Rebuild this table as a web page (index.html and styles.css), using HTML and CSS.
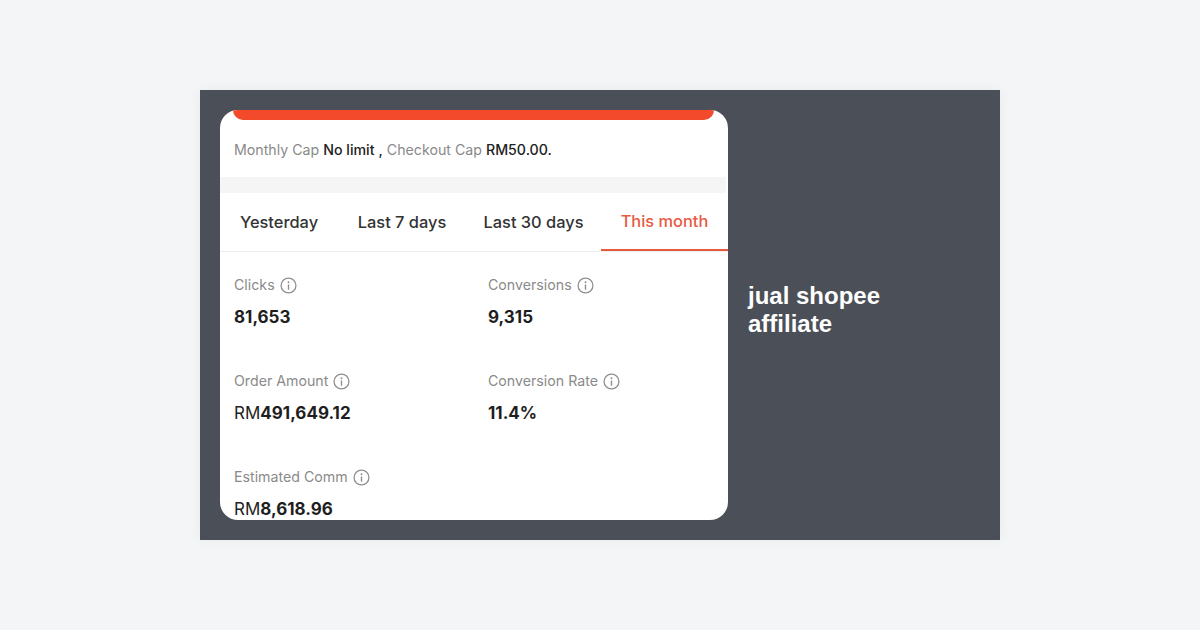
FILE: index.html
```html
<!DOCTYPE html>
<html>
<head>
<meta charset="utf-8">
<link rel="stylesheet" href="styles.css">
</head>
<body>
<div class="panel">
  <div class="card">
    <div class="redbar"></div>
    <div class="cap"><span class="muted">Monthly Cap</span> <span class="dark">No limit</span> <span class="dark">,</span> <span class="muted">Checkout Cap</span> <span class="dark">RM50.00.</span></div>
    <div class="band"></div>
    <div class="tabs">
      <div class="tab">Yesterday</div>
      <div class="tab">Last 7 days</div>
      <div class="tab">Last 30 days</div>
      <div class="tab active">This month</div>
    </div>
    <div class="stats">
      <div class="stat">
        <div class="label">Clicks <svg class="info" viewBox="0 0 16 16"><circle cx="8" cy="8" r="7" fill="none" stroke="#8f8f8f" stroke-width="1.2"/><circle cx="8" cy="4.9" r="0.9" fill="#8f8f8f"/><path d="M8 7v5" stroke="#8f8f8f" stroke-width="1.3" fill="none"/></svg></div>
        <div class="value">81,653</div>
      </div>
      <div class="stat">
        <div class="label">Conversions <svg class="info" viewBox="0 0 16 16"><circle cx="8" cy="8" r="7" fill="none" stroke="#8f8f8f" stroke-width="1.2"/><circle cx="8" cy="4.9" r="0.9" fill="#8f8f8f"/><path d="M8 7v5" stroke="#8f8f8f" stroke-width="1.3" fill="none"/></svg></div>
        <div class="value">9,315</div>
      </div>
      <div class="stat">
        <div class="label">Order Amount <svg class="info" viewBox="0 0 16 16"><circle cx="8" cy="8" r="7" fill="none" stroke="#8f8f8f" stroke-width="1.2"/><circle cx="8" cy="4.9" r="0.9" fill="#8f8f8f"/><path d="M8 7v5" stroke="#8f8f8f" stroke-width="1.3" fill="none"/></svg></div>
        <div class="value"><span class="cur">RM</span>491,649.12</div>
      </div>
      <div class="stat">
        <div class="label">Conversion Rate <svg class="info" viewBox="0 0 16 16"><circle cx="8" cy="8" r="7" fill="none" stroke="#8f8f8f" stroke-width="1.2"/><circle cx="8" cy="4.9" r="0.9" fill="#8f8f8f"/><path d="M8 7v5" stroke="#8f8f8f" stroke-width="1.3" fill="none"/></svg></div>
        <div class="value">11.4%</div>
      </div>
      <div class="stat">
        <div class="label">Estimated Comm <svg class="info" viewBox="0 0 16 16"><circle cx="8" cy="8" r="7" fill="none" stroke="#8f8f8f" stroke-width="1.2"/><circle cx="8" cy="4.9" r="0.9" fill="#8f8f8f"/><path d="M8 7v5" stroke="#8f8f8f" stroke-width="1.3" fill="none"/></svg></div>
        <div class="value"><span class="cur">RM</span>8,618.96</div>
      </div>
    </div>
  </div>
  <div class="caption">jual shopee<br>affiliate</div>
</div>
</body>
</html>
```

FILE: styles.css
```css
html, body {
  margin: 0;
  padding: 0;
}
body {
  background: #f4f5f7;
  width: 1200px;
  height: 630px;
  overflow: hidden;
  font-family: "Liberation Sans", Arial, sans-serif;
}
.panel {
  box-sizing: border-box;
  width: 800px;
  height: 450px;
  margin: 90px auto 0;
  background: #4b5058;
  padding: 20px;
  display: flex;
  gap: 20px;
  box-shadow: 0 0 12px rgba(0, 0, 0, 0.05);
}
.card {
  width: 508px;
  height: 410px;
  background: #fff;
  border-radius: 18px;
  overflow: hidden;
  flex-shrink: 0;
  font-family: Inter, "Liberation Sans", sans-serif;
}
.redbar {
  height: 10px;
  margin: 0 14px 0 13px;
  background: #f44a2c;
  border-radius: 0 0 10px 10px;
}
.cap {
  margin: 20px 0 0 14px;
  font-size: 14.2px;
  line-height: 20px;
  height: 20px;
}
.muted { color: #8a8a8a; }
.dark { color: #222; font-weight: 500; }
.band {
  margin-top: 17px;
  height: 16px;
  background: #f5f5f5;
  margin-right: 2px;
}
.tabs {
  display: grid;
  grid-template-columns: 118px 128px 135px 1fr;
  border-bottom: 1px solid #ededed;
}
.tab {
  box-sizing: border-box;
  height: 58px;
  line-height: 58px;
  text-align: center;
  font-size: 16.4px;
  font-weight: 500;
  color: #333;
}
.tab.active {
  color: #e85a43;
  border-bottom: 2px solid #e65a40;
  line-height: 56px;
}
.stats {
  display: grid;
  grid-template-columns: 254px 1fr;
  padding: 23px 14px 0;
  row-gap: 42px;
}
.label {
  display: flex;
  align-items: center;
  gap: 5px;
  font-size: 14.2px;
  line-height: 20px;
  height: 20px;
  color: #8a8a8a;
}
.info {
  width: 17px;
  height: 17px;
  flex-shrink: 0;
}
.value {
  margin-top: 10px;
  font-size: 17px;
  line-height: 24px;
  font-weight: 700;
  color: #1e1e1e;
}
.cur {
  font-weight: 400;
  color: #222;
}
.caption {
  align-self: center;
  margin-bottom: 10px;
  color: #fff;
  font-weight: bold;
  font-size: 24px;
  line-height: 28px;
}
```
